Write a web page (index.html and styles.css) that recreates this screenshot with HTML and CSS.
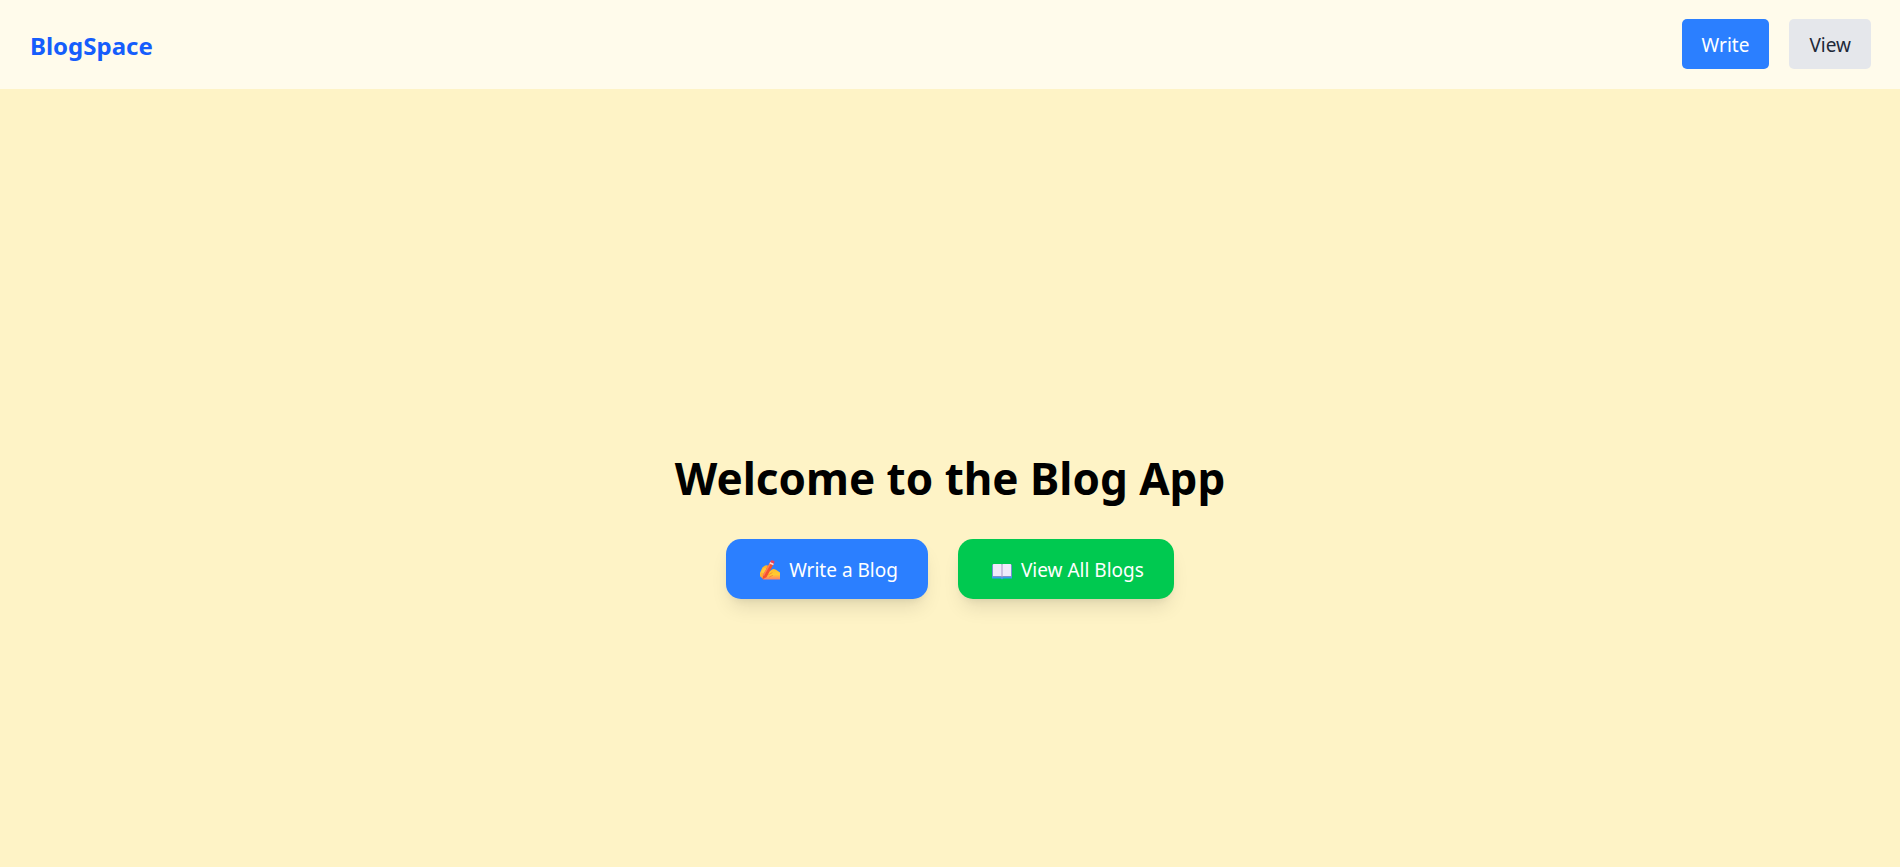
FILE: index.html
```html
<!DOCTYPE html>
<html lang="en">
<head>
<meta charset="utf-8">
<title>BlogSpace</title>
<link rel="stylesheet" href="styles.css">
</head>
<body>
<header class="navbar">
  <a class="brand" href="#">BlogSpace</a>
  <nav class="nav-actions">
    <button class="nav-button nav-write" type="button">Write</button>
    <button class="nav-button nav-view" type="button">View</button>
  </nav>
</header>
<main class="hero">
  <h1 class="title">Welcome to the Blog App</h1>
  <div class="actions">
    <button class="action action-write" type="button">
      <svg class="icon" viewBox="0 0 20 20" aria-hidden="true">
        <defs>
          <linearGradient id="hand" x1="0" y1="0" x2="0" y2="1">
            <stop offset="0" stop-color="#ffb02e"/><stop offset=".65" stop-color="#ffcb2f"/><stop offset="1" stop-color="#ff7d6b"/>
          </linearGradient>
        </defs>
        <path fill="url(#hand)" d="M6.500 5.200C4.500 5.200 2.600 7 1.600 9.200L0 13v3l3.500 3.500H20V12.500l-4-2.800c-1.800-1.200-3.500-.8-4.600.3L10 11 9.500 6z"/>
        <path fill="none" stroke="#f08a2b" stroke-width=".8" stroke-linecap="round" d="M8.500 14.800l3.500-2M9.500 17l3-1.500"/>
        <path fill="#f4512f" d="M10.400 1.800l3.600 1.700L6.500 17.200l-4 2 .2-4z"/>
        <path fill="#ff8055" d="M10.400 1.800l1.200.6L4 15.900l-1.300-.7z"/>
        <path fill="#fbd5dc" d="M10.300 2l3.600 1.700-.8 1.500-3.600-1.700z"/>
        <path fill="#ef3f58" d="M11 .6c.8-1.200 3.900.2 3.400 1.600l-.5 1.400-3.500-1.700z"/>
        <path fill="#ffc83d" d="M3.500 8.400c1.300-1 2.800-.3 2.500.9L4 12.400c-.8 1.100-2.800.4-2.500-.8z"/>
        <path fill="#ffae33" d="M.8 13c1-.8 2.300-.2 2.100.9l-.4 3.900L0 15.900z"/>
      </svg>
      <span>Write a Blog</span>
    </button>
    <button class="action action-view" type="button">
      <svg class="icon" viewBox="0 0 20 20" aria-hidden="true">
        <path fill="#3b9cf0" d="M0 5h20v13.500h-8.600L10 19.500l-1.400-1H0z"/>
        <path fill="#998ec0" d="M.4 5.200c0-.7.300-1.200 1-1.200H9l1 .7 1-.7h7.600c.7 0 1 .500 1 1.200v11.600H11l-1 1.100-1-1.100H.4z"/>
        <path fill="#f0eafa" d="M1 4.800C1 4.300 1.300 4 1.800 4h6.400C9.300 4 9.700 4.500 9.700 5.500V16H1zM10.300 5.500c0-1 .4-1.500 1.500-1.500h6.400c.5 0 .8.300.8.800V16h-8.700z"/>
        <path fill="#d8cde9" d="M9 4.500h2V16H9z"/>
        <path fill="#b4a5cf" d="M9.700 5h.6v12h-.6z"/>
      </svg>
      <span>View All Blogs</span>
    </button>
  </div>
</main>
</body>
</html>
```
FILE: styles.css
```css
* {
  box-sizing: border-box;
}

body {
  display: flex;
  flex-direction: column;
  min-height: 100vh;
  margin: 0;
  background: #fef3c6;
  font-family: "Segoe UI", "Noto Sans", "Open Sans", sans-serif;
  font-size: 19px;
  line-height: 30px;
}

button {
  border: 0;
  font: inherit;
  cursor: pointer;
}

.navbar {
  display: flex;
  align-items: center;
  justify-content: space-between;
  padding: 19px 29px 20px 30px;
  background: #fffbeb;
}

.brand {
  padding-top: 3px;
  color: #155dfc;
  font-size: 24px;
  font-weight: 700;
  text-decoration: none;
}

.nav-actions {
  display: flex;
  gap: 20px;
}

.nav-button {
  padding: 11px 20px 9px;
  border-radius: 5px;
}

.nav-write {
  background: #2b7fff;
  color: #fff;
}

.nav-view {
  background: #e5e7eb;
  color: #1e2939;
}

.hero {
  flex: 1;
  display: flex;
  flex-direction: column;
  align-items: center;
  justify-content: center;
  gap: 30px;
  padding-top: 90px;
}

.title {
  margin: 0;
  color: #000;
  font-size: 44px;
  font-weight: 700;
  line-height: 62px;
}

.actions {
  display: flex;
  gap: 30px;
}

.action {
  display: flex;
  align-items: center;
  gap: 9px;
  padding: 16px 30px 14px 34px;
  border-radius: 15px;
  color: #fff;
  box-shadow: 0 12px 19px -4px rgb(0 0 0 / 10%), 0 5px 8px -5px rgb(0 0 0 / 10%);
}

.action-write {
  background: #2b7fff;
}

.action-view {
  background: #00c950;
}

.icon {
  width: 20px;
  height: 20px;
}
```
